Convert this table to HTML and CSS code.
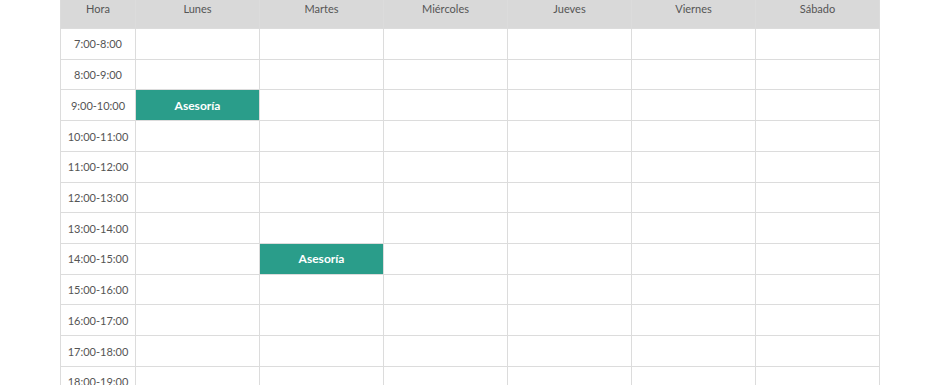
FILE: index.html
```html
<!DOCTYPE html>
<html lang="es">
<head>
<meta charset="utf-8">
<title>Horario</title>
<link rel="stylesheet" href="styles.css">
</head>
<body>
<div class="schedule">
  <div class="head">Hora</div><div class="head">Lunes</div><div class="head">Martes</div><div class="head">Miércoles</div><div class="head">Jueves</div><div class="head">Viernes</div><div class="head">Sábado</div>

  <div class="time">7:00-8:00</div><div class="cell"></div><div class="cell"></div><div class="cell"></div><div class="cell"></div><div class="cell"></div><div class="cell"></div>
  <div class="time">8:00-9:00</div><div class="cell"></div><div class="cell"></div><div class="cell"></div><div class="cell"></div><div class="cell"></div><div class="cell"></div>
  <div class="time">9:00-10:00</div><div class="cell event">Asesoría</div><div class="cell"></div><div class="cell"></div><div class="cell"></div><div class="cell"></div><div class="cell"></div>
  <div class="time">10:00-11:00</div><div class="cell"></div><div class="cell"></div><div class="cell"></div><div class="cell"></div><div class="cell"></div><div class="cell"></div>
  <div class="time">11:00-12:00</div><div class="cell"></div><div class="cell"></div><div class="cell"></div><div class="cell"></div><div class="cell"></div><div class="cell"></div>
  <div class="time">12:00-13:00</div><div class="cell"></div><div class="cell"></div><div class="cell"></div><div class="cell"></div><div class="cell"></div><div class="cell"></div>
  <div class="time">13:00-14:00</div><div class="cell"></div><div class="cell"></div><div class="cell"></div><div class="cell"></div><div class="cell"></div><div class="cell"></div>
  <div class="time">14:00-15:00</div><div class="cell"></div><div class="cell event">Asesoría</div><div class="cell"></div><div class="cell"></div><div class="cell"></div><div class="cell"></div>
  <div class="time">15:00-16:00</div><div class="cell"></div><div class="cell"></div><div class="cell"></div><div class="cell"></div><div class="cell"></div><div class="cell"></div>
  <div class="time">16:00-17:00</div><div class="cell"></div><div class="cell"></div><div class="cell"></div><div class="cell"></div><div class="cell"></div><div class="cell"></div>
  <div class="time">17:00-18:00</div><div class="cell"></div><div class="cell"></div><div class="cell"></div><div class="cell"></div><div class="cell"></div><div class="cell"></div>
  <div class="time">18:00-19:00</div><div class="cell"></div><div class="cell"></div><div class="cell"></div><div class="cell"></div><div class="cell"></div><div class="cell"></div>
</div>
</body>
</html>
```

FILE: styles.css
```css
html, body {
  margin: 0;
  padding: 0;
  background: #ffffff;
}

body {
  font-family: Lato, "Noto Sans", sans-serif;
  color: #555555;
  overflow: hidden;
}

.schedule {
  margin-left: 60px;
  width: 820px;
  display: grid;
  grid-template-columns: 74px repeat(6, 123px);
  grid-template-rows: 28px repeat(12, 29.73px);
  gap: 1px;
  background: #dcdcdc;
  border-left: 1px solid #dcdcdc;
  border-right: 1px solid #dcdcdc;
  box-sizing: border-box;
}

.head {
  background: #d9d9d9;
  font-size: 11px;
  color: #555555;
  text-align: center;
  padding-top: 2px;
  line-height: 13px;
}

.time {
  background: #ffffff;
  font-size: 11px;
  color: #555555;
  display: flex;
  align-items: center;
  justify-content: center;
}

.cell {
  background: #ffffff;
}

.cell.event {
  background: #2a9d8a;
  color: #ffffff;
  font-weight: 700;
  font-size: 12px;
  display: flex;
  align-items: center;
  justify-content: center;
}
```
